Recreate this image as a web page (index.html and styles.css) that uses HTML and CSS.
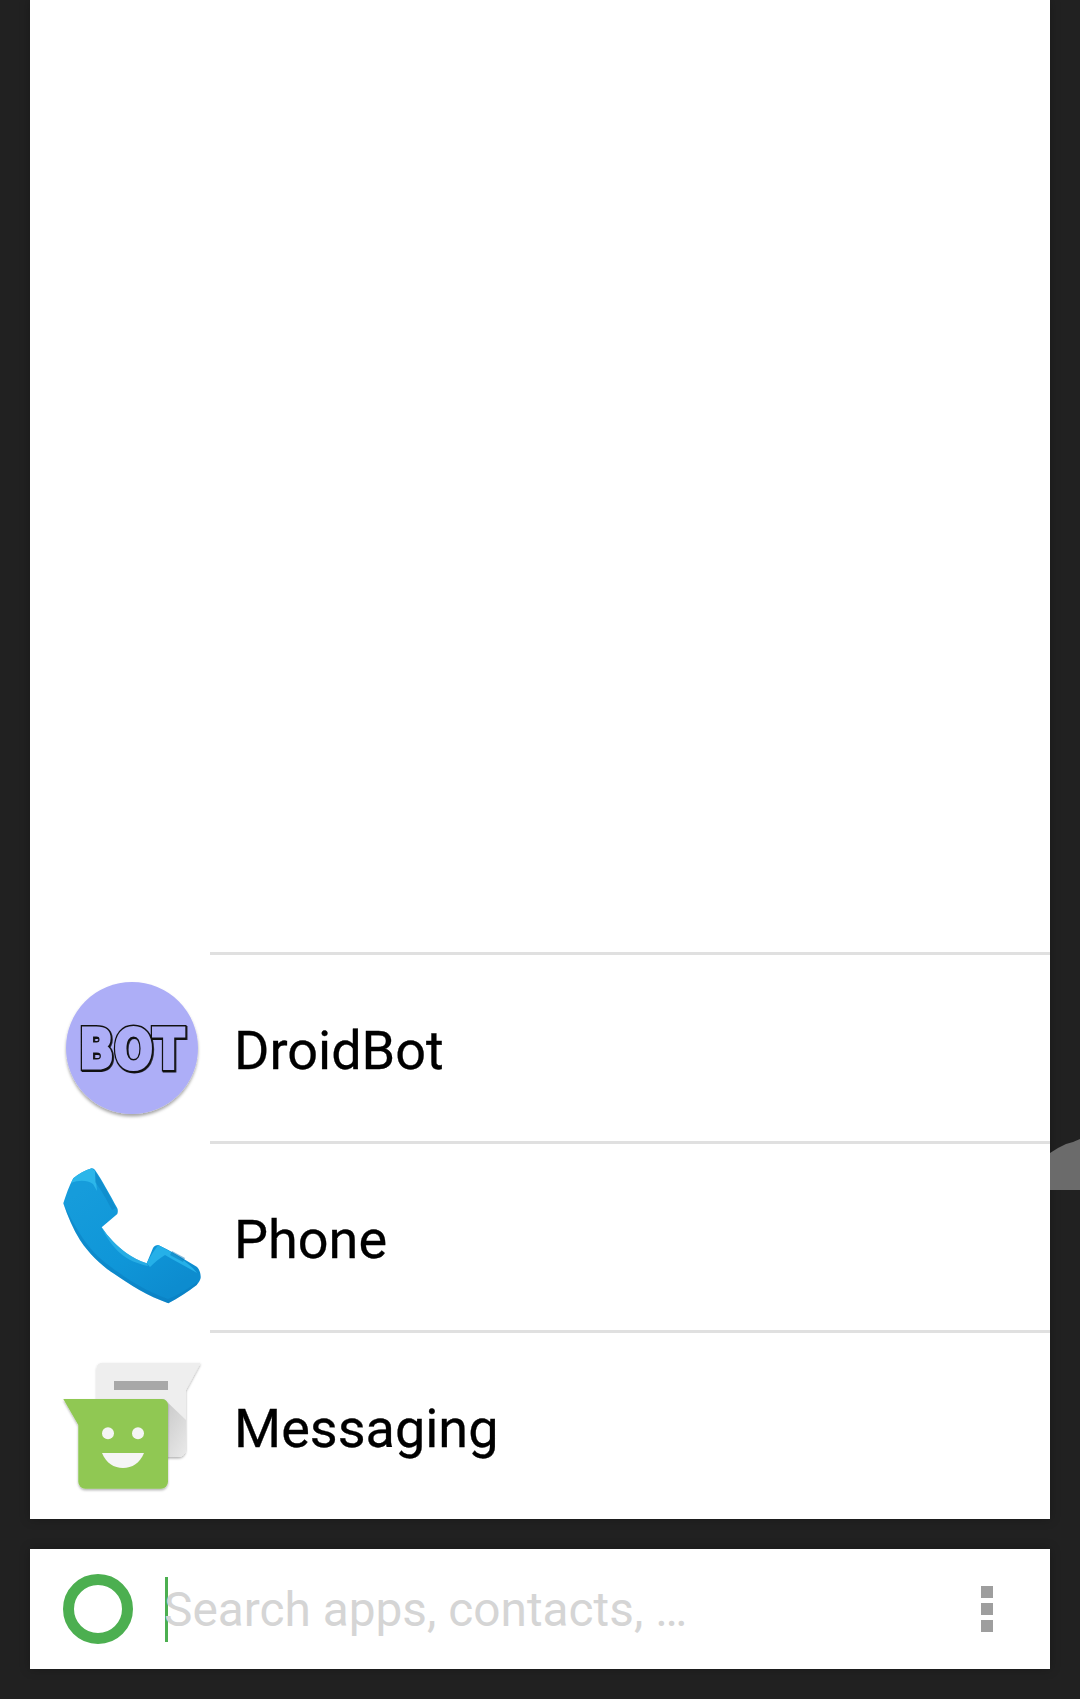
FILE: index.html
```html
<!DOCTYPE html>
<html lang="en">
<head>
    <meta charset="UTF-8">
    <meta name="viewport" content="width=device-width, initial-scale=1.0">
    <title>Search</title>
    <link rel="stylesheet" href="styles.css">
</head>
<body>
    <!-- wallpaper shape peeking out behind the list -->
    <div class="backdrop"></div>

    <div class="results">
        <div class="row">
            <div class="row-icon">
                <svg viewBox="0 0 144 144" width="144" height="144">
                    <defs>
                        <filter id="botShadow" x="-20%" y="-20%" width="140%" height="140%">
                            <feDropShadow dx="0" dy="2.5" stdDeviation="1.5" flood-color="#000" flood-opacity="0.35"/>
                        </filter>
                    </defs>
                    <circle cx="72" cy="72" r="66" fill="#adaef7" filter="url(#botShadow)"/>
                    <g transform="scale(0.82 1)">
                        <text class="bot-text bot-edge" x="23.2" y="92" aria-hidden="true">BOT</text>
                        <text class="bot-text bot-face" x="23.2" y="92">BOT</text>
                    </g>
                </svg>
            </div>
            <div class="row-label">DroidBot</div>
        </div>

        <div class="row">
            <div class="row-icon">
                <svg viewBox="0 0 144 144" width="144" height="144">
                    <defs>
                        <linearGradient id="phoneBody" x1="0.2" y1="0.1" x2="0.8" y2="0.9">
                            <stop offset="0" stop-color="#169cdb"/>
                            <stop offset="0.6" stop-color="#0f96d8"/>
                            <stop offset="1" stop-color="#0d8ccf"/>
                        </linearGradient>
                    </defs>
                    <path fill="url(#phoneBody)" d="M31.7 3.3 C25 5 19 9 13.3 13.3 C9 21 6 30 3.3 38.3 C8 52 13 64 20 75 C30 90 41 100 53.3 108.3 C70 120 88 131 108.3 138.3 C118 133 128 127 136.7 120 C139 117 141 114 140.7 111.7 C140.5 107 139 104 136.7 101.7 C124 94 111 86 98.3 80 C96 80 94 81 93 83 L86.7 98.3 C79 96 72 92 66.7 88.3 C57 81 48 72 41.7 62.3 L57.3 49 C58 47 58 45 57.3 43.3 C50 30 42 15 35 5 C34 4 33 3 31.7 3.3 Z"/>
                    <path fill="#2cb6ea" d="M31.7 3.3 C25 5 19 9 13.3 13.3 L11 18 C19 15 27 15 33 19 L37 26 L35 6 Z"/>
                    <path fill="#0a78b8" opacity="0.35" d="M35 6 C42 16 50 32 56 43 L52 45 C47 35 40 23 35 17 Z"/>
                    <path fill="#25b0e8" d="M98.3 80 C95 84 90 92 86.7 98.3 L90 102 C95 97 100 93 105 90 C115 96 127 102 137 108 C130 98 112 87 98.3 80 Z"/>
                    <path fill="#0a78b8" opacity="0.5" d="M112 86 L125 93 L123 97 L110 90 Z"/>
                    <path fill="#32b6ea" opacity="0.7" d="M41.7 62.3 C48 72 57 81 66.7 88.3 C72 92 79 96 86.7 98.3 L88 101 C78 99 68 95 60 88 C52 81 46 72 41.7 62.3 Z"/>
                    <path fill="#0873b4" opacity="0.35" d="M3.3 38.3 C8 52 13 64 20 75 C30 90 41 100 53.3 108.3 C70 120 88 131 108.3 138.3 C118 133 128 127 136.7 120 L137 117 C128 124 118 130 108 134 C88 127 70 116 55 105 C42 96 31 86 22 72 C15 61 9 51 3.3 38.3 Z"/>
                </svg>
            </div>
            <div class="row-label">Phone</div>
        </div>

        <div class="row">
            <div class="row-icon">
                <svg viewBox="0 0 144 144" width="144" height="144">
                    <defs>
                        <linearGradient id="foldShade" x1="0" y1="0" x2="0.8" y2="1">
                            <stop offset="0" stop-color="#c4c4c4"/>
                            <stop offset="1" stop-color="#e6e6e6"/>
                        </linearGradient>
                        <filter id="msgShadow" x="-10%" y="-10%" width="120%" height="125%">
                            <feDropShadow dx="0" dy="1.5" stdDeviation="1.2" flood-color="#000" flood-opacity="0.3"/>
                        </filter>
                    </defs>
                    <path fill="#eeeeee" filter="url(#msgShadow)" d="M42 8.7 H140.7 L126 36 V95 A8 8 0 0 1 118 103 H36.7 V14 A5.3 5.3 0 0 1 42 8.7 Z"/>
                    <rect x="54" y="27" width="54" height="9" fill="#a8a8a8"/>
                    <path fill="url(#foldShade)" d="M104 45 L126 66 V95 A8 8 0 0 1 118 103 H100 V45 Z"/>
                    <path fill="#90c853" filter="url(#msgShadow)" d="M3.3 45 H102 A6 6 0 0 1 108 51 V127.7 A7 7 0 0 1 101 134.7 H25.3 A7 7 0 0 1 18.3 127.7 V71 Z"/>
                    <circle cx="48" cy="79.3" r="6" fill="#f5f5f5"/>
                    <circle cx="78" cy="79.3" r="6" fill="#f5f5f5"/>
                    <path fill="#f5f5f5" d="M42 99 H84 C80 109 72 114 63 114 C54 114 46 109 42 99 Z"/>
                </svg>
            </div>
            <div class="row-label">Messaging</div>
        </div>
    </div>

    <div class="search">
        <svg class="search-logo" viewBox="0 0 70 70" width="70" height="70">
            <circle cx="35" cy="35" r="29.5" fill="none" stroke="#4caf50" stroke-width="11"/>
        </svg>
        <div class="search-field">
            <span class="cursor"></span>
            <span class="hint">Search apps, contacts, …</span>
        </div>
        <div class="menu">
            <span></span>
            <span></span>
            <span></span>
        </div>
    </div>
</body>
</html>
```

FILE: styles.css
```css
html, body {
    height: 100%;
}
body {
    position: relative;
    display: flex;
    flex-direction: column;
    box-sizing: border-box;
    height: 1699px;
    margin: 0;
    padding: 0 30px 30px;
    overflow: hidden;
    background: #212121;
    font-family: Roboto, "Noto Sans", sans-serif;
}
.backdrop {
    position: absolute;
    top: 1130px;
    right: 0;
    width: 30px;
    height: 60px;
    background: #6b6b6b;
    clip-path: polygon(0 23px, 8px 18px, 16px 14px, 23px 12px, 30px 9px, 30px 60px, 0 60px);
}
.results {
    flex: 1;
    display: flex;
    flex-direction: column;
    justify-content: flex-end;
    background: #fff;
    box-shadow: 0 0 10px rgba(0, 0, 0, 0.25);
}
.row {
    display: flex;
    height: 189px;
}
.row-icon {
    display: flex;
    align-items: center;
    box-sizing: border-box;
    width: 180px;
    padding: 3px 0 0 30px;
}
.row-label {
    flex: 1;
    display: flex;
    align-items: center;
    padding: 4px 0 0 24px;
    border-top: 3px solid #e0e0e0;
    color: #000;
    font-size: 54px;
    -webkit-text-stroke: 0.3px #000;
}
.bot-text {
    font-family: "DejaVu Sans", sans-serif;
    font-size: 56px;
    font-weight: 700;
}
.bot-edge {
    fill: #111;
    stroke: #111;
    stroke-width: 6;
    filter: drop-shadow(1.5px 1.5px 0 #111);
}
.bot-face {
    fill: #adaef7;
    stroke: #adaef7;
    stroke-width: 3;
}
.search {
    display: flex;
    align-items: center;
    height: 120px;
    margin-top: 30px;
    background: #fff;
    box-shadow: 0 0 10px rgba(0, 0, 0, 0.25);
}
.search-logo {
    margin-left: 33px;
}
.search-field {
    flex: 1;
    display: flex;
    align-items: center;
    margin-left: 32px;
}
.cursor {
    width: 3px;
    height: 65px;
    background: #4caf50;
}
.hint {
    margin: 2px 0 0 -4px;
    color: #d5d5d5;
    font-size: 47.8px;
}
.menu {
    display: flex;
    flex-direction: column;
    gap: 5px;
    margin-right: 57px;
}
.menu span {
    width: 12px;
    height: 12px;
    background: #9e9e9e;
}
```
